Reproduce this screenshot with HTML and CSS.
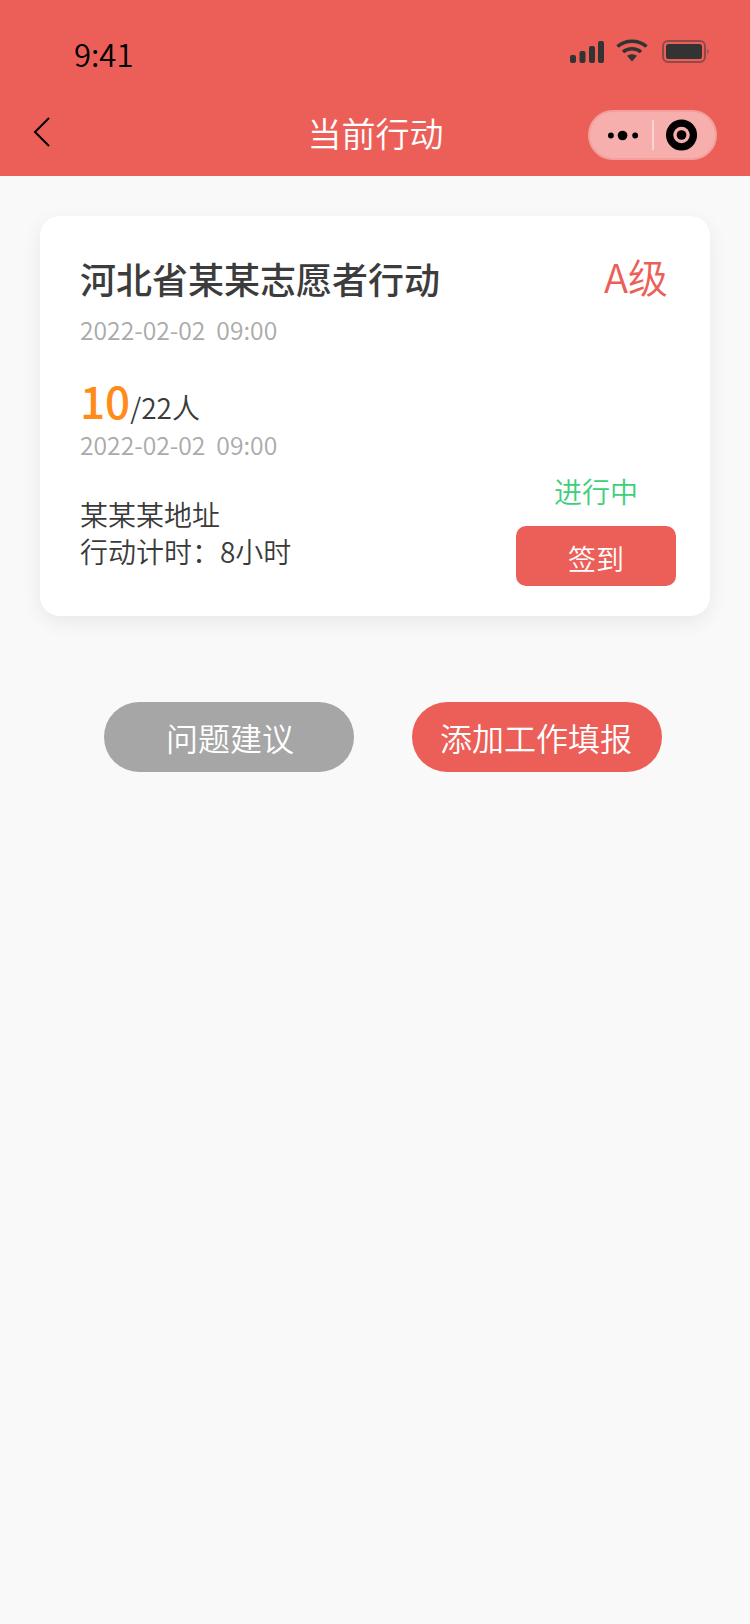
FILE: index.html
```html
<!DOCTYPE html>
<html lang="zh-CN">
<head>
<meta charset="utf-8">
<title>当前行动</title>
<link rel="stylesheet" href="styles.css">
</head>
<body>
<header class="top">
  <div class="status">
    <span class="time">9:41</span>
    <div class="status-icons">
      <svg class="signal" width="34" height="22" viewBox="0 0 34 22"><rect x="0" y="14" width="6" height="8" rx="2"/><rect x="9.5" y="10" width="6" height="12" rx="2"/><rect x="19" y="5" width="6" height="17" rx="2"/><rect x="28" y="0" width="6" height="22" rx="2"/></svg>
      <svg class="wifi" width="32" height="23" viewBox="0 0 32 23"><path d="M1.5 7.5C9.5 .5 22.5 .5 30.5 7.5" fill="none" stroke="#333" stroke-width="3.6"/><path d="M7 13C12 8.6 20 8.6 25 13" fill="none" stroke="#333" stroke-width="3.6"/><path d="M11 16.8C13.8 14.6 18.2 14.6 21 16.8L16 22.5Z" fill="#333"/></svg>
      <svg class="battery" width="47" height="23" viewBox="0 0 47 23"><rect x="1" y="1" width="42" height="21" rx="5" fill="none" stroke="#333" stroke-opacity=".5" stroke-width="2"/><rect x="4" y="4" width="36" height="15" rx="2.5" fill="#333"/><path d="M45 8.5L47 11.500L45 14.500Z" fill="#333" fill-opacity=".4"/></svg>
    </div>
  </div>
  <nav class="nav">
    <svg class="back" width="17" height="30" viewBox="0 0 17 30"><path d="M16 1L2 15L16 29" fill="none" stroke="#000" stroke-width="2"/></svg>
    <h1 class="nav-title">当前行动</h1>
    <div class="capsule">
      <svg class="dots" width="32" height="11" viewBox="0 0 32 11"><circle cx="3" cy="5.500" r="3"/><circle cx="15" cy="5.500" r="5"/><circle cx="28" cy="5.500" r="3"/></svg>
      <span class="capsule-line"></span>
      <svg class="target" width="32" height="32" viewBox="0 0 32 32"><circle cx="16" cy="16" r="16"/><circle cx="16" cy="16" r="8.500" fill="#f6afad"/><circle cx="16" cy="16" r="5"/></svg>
    </div>
  </nav>
</header>

<main class="content">
  <section class="card">
    <div class="card-head">
      <h2 class="card-title">河北省某某志愿者行动</h2>
      <span class="level">A级</span>
    </div>
    <p class="date date-first">2022-02-02&nbsp;&nbsp;09:00</p>
    <p class="count"><span class="count-num">10</span>/22人</p>
    <p class="date">2022-02-02&nbsp;&nbsp;09:00</p>
    <div class="card-foot">
      <div class="info">
        <p>某某某地址</p>
        <p>行动计时：8小时</p>
      </div>
      <div class="side">
        <span class="state">进行中</span>
        <button class="sign" type="button">签到</button>
      </div>
    </div>
  </section>
  <div class="actions">
    <button class="pill pill-gray" type="button">问题建议</button>
    <button class="pill pill-red" type="button">添加工作填报</button>
  </div>
</main>
</body>
</html>
```

FILE: styles.css
```css
* { box-sizing: border-box; }
html, body { margin: 0; padding: 0; }
body {
  width: 750px;
  height: 1624px;
  overflow: hidden;
  background: #f9f9f9;
  color: #3a3a3a;
  font-family: "Noto Sans CJK SC", "Noto Sans", sans-serif;
  font-weight: 350;
}
p, h1, h2 { margin: 0; font-weight: 350; }

.top { height: 176px; background: #ec5f59; }
.status { height: 88px; display: flex; justify-content: space-between; padding: 32px 41px 0 74px; }
.time { font-size: 31px; line-height: 44px; color: #000; }
.status-icons { display: flex; align-items: flex-start; gap: 12px; padding-top: 7px; }
.signal { fill: #333; margin-top: 2px; }
.battery { margin-left: 2px; margin-top: 1px; }

.nav { height: 88px; display: flex; align-items: center; justify-content: space-between; padding: 0 33px; position: relative; }
.nav-title { position: absolute; left: 1px; right: 0; text-align: center; font-size: 34px; line-height: 48px; color: #fff; margin-top: 2px; }
.capsule {
  width: 129px; height: 50px; border-radius: 25px;
  background: #f6afad; border: 2px solid #f2a09d;
  display: flex; align-items: center; padding: 0 18px 0 18px;
  position: relative;
  margin-top: 6px;
}
.dots { fill: #000; }
.capsule-line { width: 2px; height: 30px; background: #f7d5d3; margin-left: 13px; margin-right: 12px; }

.content { padding: 40px; }
.card {
  height: 400px; border-radius: 20px; background: #fff;
  box-shadow: 0 6px 20px rgba(0, 0, 0, .07);
  padding: 37px 34px 30px 40px;
  display: flex; flex-direction: column;
}
.card-head { display: flex; justify-content: space-between; align-items: center; height: 50px; padding-right: 8px; }
.card-title { font-size: 36px; font-weight: 500; line-height: 50px; color: #3c3c3c; }
.level { font-size: 40px; line-height: 50px; color: #ec5f59; margin-top: -4px; }
.date { font-size: 24.700px; line-height: 36px; color: #aaa; }
.date-first { margin-top: 8px; }
.count { margin-top: 25px; font-size: 28px; line-height: 56px; height: 54px; display: flex; align-items: baseline; }
.count-num { font-size: 44px; color: #ff8c1a; font-weight: 500; }
.card-foot { display: flex; justify-content: space-between; align-items: flex-end; margin-top: auto; }
.info { font-size: 28px; line-height: 37px; padding-bottom: 16px; }
.side { display: flex; flex-direction: column; align-items: center; gap: 15px; }
.state { font-size: 28px; line-height: 40px; color: #3ccf7a; }
.sign {
  width: 160px; height: 60px; border: 0; border-radius: 10px; padding: 4px 0 0;
  background: #ec5f59; color: #fff; font: inherit; font-size: 28px;
}

.actions { display: flex; gap: 58px; margin-top: 86px; padding-left: 64px; }
.pill {
  width: 250px; height: 70px; border: 0; border-radius: 35px;
  color: #fff; font: inherit; font-size: 32px; padding: 0;
}
.pill-gray { background: #a6a6a6; padding-left: 2px; }
.pill-red { background: #ec5f59; padding-right: 2px; }
```
